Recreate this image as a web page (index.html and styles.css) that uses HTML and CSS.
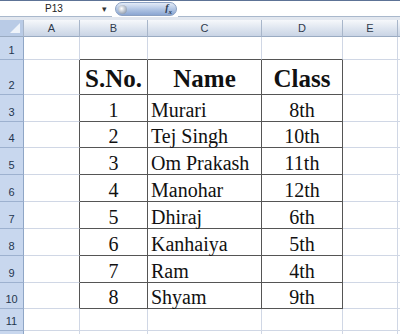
FILE: index.html
```html
<!DOCTYPE html>
<html lang="en">
<head>
    <meta charset="UTF-8">
    <title>Class List</title>
    <link rel="stylesheet" href="styles.css">
</head>
<body>
    <div class="formula-bar">
        <div class="name-box">
            <span class="cell-ref">P13</span>
            <span class="drop">&#9662;</span>
        </div>
        <div class="fx-btn">
            <span class="knob"></span>
            <span class="fx">f<sub>x</sub></span>
        </div>
        <div class="formula-input"></div>
    </div>
    <div class="gap"></div>

    <table class="sheet">
        <colgroup>
            <col style="width:24px">
            <col style="width:56px">
            <col style="width:68px">
            <col style="width:114px">
            <col style="width:81px">
            <col style="width:55px">
            <col>
        </colgroup>
        <tr class="col-head">
            <th class="corner"><span class="tri"></span></th>
            <th>A</th><th>B</th><th>C</th><th>D</th><th>E</th><th></th>
        </tr>
        <tr class="r1">
            <th class="row-head">1</th>
            <td></td><td class="tt"></td><td class="tt"></td><td class="tt"></td><td></td><td></td>
        </tr>
        <tr class="r2">
            <th class="row-head">2</th>
            <td class="tl"></td>
            <td class="t head center">S.No.</td>
            <td class="t head center">Name</td>
            <td class="t head center">Class</td>
            <td></td><td></td>
        </tr>
        <tr class="r">
            <th class="row-head">3</th>
            <td class="tl"></td><td class="t center">1</td><td class="t">Murari</td><td class="t center">8th</td><td></td><td></td>
        </tr>
        <tr class="r short">
            <th class="row-head">4</th>
            <td class="tl"></td><td class="t center">2</td><td class="t">Tej Singh</td><td class="t center">10th</td><td></td><td></td>
        </tr>
        <tr class="r">
            <th class="row-head">5</th>
            <td class="tl"></td><td class="t center">3</td><td class="t">Om Prakash</td><td class="t center">11th</td><td></td><td></td>
        </tr>
        <tr class="r">
            <th class="row-head">6</th>
            <td class="tl"></td><td class="t center">4</td><td class="t">Manohar</td><td class="t center">12th</td><td></td><td></td>
        </tr>
        <tr class="r">
            <th class="row-head">7</th>
            <td class="tl"></td><td class="t center">5</td><td class="t">Dhiraj</td><td class="t center">6th</td><td></td><td></td>
        </tr>
        <tr class="r">
            <th class="row-head">8</th>
            <td class="tl"></td><td class="t center">6</td><td class="t">Kanhaiya</td><td class="t center">5th</td><td></td><td></td>
        </tr>
        <tr class="r">
            <th class="row-head">9</th>
            <td class="tl"></td><td class="t center">7</td><td class="t">Ram</td><td class="t center">4th</td><td></td><td></td>
        </tr>
        <tr class="r short">
            <th class="row-head">10</th>
            <td class="tl"></td><td class="t center">8</td><td class="t">Shyam</td><td class="t center">9th</td><td></td><td></td>
        </tr>
        <tr class="r11">
            <th class="row-head">11</th>
            <td></td><td></td><td></td><td></td><td></td><td></td>
        </tr>
        <tr class="r11">
            <th class="row-head"></th>
            <td></td><td></td><td></td><td></td><td></td><td></td>
        </tr>
    </table>
</body>
</html>
```

FILE: styles.css
```css
body {
    margin: 0;
    background: #ffffff;
    font-family: 'Liberation Sans', Arial, sans-serif;
    overflow: hidden;
}
.formula-bar {
    display: flex;
    height: 16px;
    border-top: 1px solid #5d7396;
    background: #ffffff;
}
.name-box {
    width: 112px;
    display: flex;
    align-items: center;
    border-bottom: 1px solid #a9b8cc;
    font-size: 10px;
    color: #222;
}
.cell-ref {
    flex: 1;
    text-align: center;
    padding-left: 6px;
}
.drop {
    font-size: 9px;
    width: 10px;
    color: #333;
}
.fx-btn {
    width: 62px;
    height: 14px;
    margin: 1px 1px 0 3px;
    border-radius: 8px;
    background: linear-gradient(#e3ebf7, #aec3e3 55%, #8ba6d2);
    border: 1px solid #8aa0c2;
    box-sizing: border-box;
    display: flex;
    align-items: center;
    justify-content: space-between;
    padding: 0 4px 0 2px;
}
.knob {
    width: 9px;
    height: 9px;
    border-radius: 50%;
    background: radial-gradient(circle at 40% 40%, #ffffff, #9aa6b6 70%, #5f6d80);
}
.fx {
    font-family: 'Liberation Serif', serif;
    font-style: italic;
    font-weight: bold;
    font-size: 10px;
    color: #2d3a4f;
}
.fx sub {
    font-size: 7px;
}
.formula-input {
    flex: 1;
    border-bottom: 1px solid #a9b8cc;
}
.gap {
    height: 3px;
    background: #e2e7ef;
}
.sheet {
    border-collapse: separate;
    border-spacing: 0;
    table-layout: fixed;
    width: 420px;
}
.sheet td, .sheet th {
    padding: 0;
    box-sizing: border-box;
    border-right: 1px solid #d0d7e5;
    border-bottom: 1px solid #d0d7e5;
}
.col-head th {
    height: 17px;
    font-weight: normal;
    font-size: 11px;
    color: #2f3b4d;
    background: linear-gradient(#f6f8fb, #dfe6f0 50%, #c9d4e5);
    border-right: 1px solid #a8b6ca;
    border-bottom: 1px solid #9aabc2;
}
.col-head .corner {
    background: #b9cbe6;
    position: relative;
}
.tri {
    position: absolute;
    right: 3px;
    bottom: 3px;
    width: 0;
    height: 0;
    border-left: 10px solid transparent;
    border-bottom: 10px solid #eef3fa;
}
.row-head {
    font-weight: normal;
    font-size: 11px;
    color: #24364f;
    background: #c8d7ee;
    vertical-align: bottom;
    padding-bottom: 3px !important;
    border-right: 1px solid #8fa6c6 !important;
    border-bottom: 1px solid #9db1cf !important;
}
.r1 td, .r1 th { height: 23px; }
.r2 td, .r2 th { height: 35px; }
.r td, .r th { height: 27px; }
.short td, .short th { height: 26px; }
.r11 td, .r11 th { height: 22px; }
.sheet .t {
    border-right: 1px solid #555;
    border-bottom: 1px solid #555;
    font-family: 'Liberation Serif', 'Times New Roman', serif;
    font-size: 20px;
    color: #111;
    vertical-align: bottom;
    padding-left: 3px;
    line-height: 22px;
}
.sheet .tl {
    border-right: 1px solid #555;
}
.sheet .tt {
    border-bottom: 1px solid #555;
}
.sheet .head {
    font-weight: bold;
    font-size: 25px;
    line-height: 30px;
}
.sheet .center {
    text-align: center;
    padding-left: 0;
}
```
